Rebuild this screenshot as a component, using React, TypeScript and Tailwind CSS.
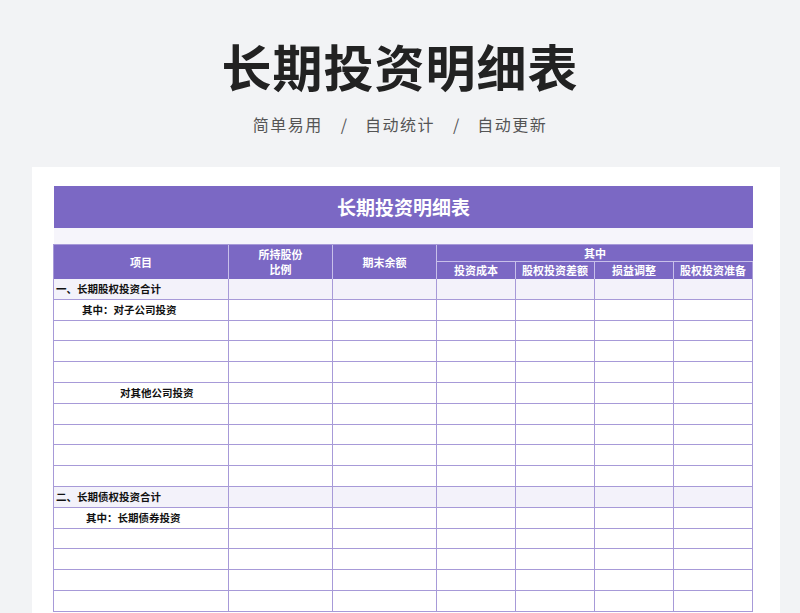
import React from "react";

const rows: { t: string; pad: string; shade?: boolean }[] = [
  { t: "一、长期股权投资合计", pad: "pl-[2px]", shade: true },
  { t: "其中：对子公司投资", pad: "pl-[28px]" },
  { t: "", pad: "" },
  { t: "", pad: "" },
  { t: "", pad: "" },
  { t: "对其他公司投资", pad: "pl-[66px]" },
  { t: "", pad: "" },
  { t: "", pad: "" },
  { t: "", pad: "" },
  { t: "", pad: "" },
  { t: "二、长期债权投资合计", pad: "pl-[2px]", shade: true },
  { t: "其中：长期债券投资", pad: "pl-[32px]" },
  { t: "", pad: "" },
  { t: "", pad: "" },
  { t: "", pad: "" },
  { t: "", pad: "" },
];

const widths = ["w-[175px]", "w-[104px]", "w-[104px]", "w-[79px]", "w-[79px]", "w-[79px]", "w-[79px]"];

export default function App() {
  return (
    <div
      className="w-[800px] h-[613px] overflow-hidden bg-[#f2f3f5] flex flex-col items-center"
      style={{ fontFamily: '"Noto Sans CJK SC", "Noto Sans", sans-serif' }}
    >
      <div className="mt-[30px] text-[50px] leading-[70px] font-bold text-[#222] tracking-[1px]">长期投资明细表</div>
      <div className="mt-[12px] text-[16px] leading-[24px] text-[#555] flex gap-[18px]">
        <span className="tracking-[1.5px]">简单易用</span>
        <span>/</span>
        <span className="tracking-[1.5px]">自动统计</span>
        <span>/</span>
        <span className="tracking-[1.5px]">自动更新</span>
      </div>
      <div className="mt-[31px] w-[748px] self-start ml-[32px] flex-1 min-h-0 overflow-hidden bg-white pt-[19px] pl-[22px]">
        <div className="w-[699px] h-[42px] bg-[#7b68c4] flex items-center justify-center text-white text-[19px] font-bold">
          长期投资明细表
        </div>
        <div className="w-[699px] h-[16px] bg-[#f6f5fb]" />
        <div className="w-[700px] -ml-[1px] border-l border-t border-[#a79ad8]">
          <div className="flex h-[34px] bg-[#7b68c4] text-white text-[11px] font-bold">
            <div className="w-[175px] border-r border-[#c8c0ea] flex items-center justify-center">项目</div>
            <div className="w-[104px] border-r border-[#c8c0ea] flex flex-col items-center justify-center leading-[15px]">
              <span>所持股份</span>
              <span>比例</span>
            </div>
            <div className="w-[104px] border-r border-[#c8c0ea] flex items-center justify-center">期末余额</div>
            <div className="flex-1 flex flex-col">
              <div className="h-[17px] border-b border-[#c8c0ea] flex items-center justify-center">其中</div>
              <div className="flex flex-1">
                {["投资成本", "股权投资差额", "损益调整", "股权投资准备"].map((s, i) => (
                  <div key={s} className={`w-[79px] ${i < 3 ? "border-r border-[#c8c0ea]" : "border-r border-[#a79ad8]"} flex items-center justify-center`}>
                    {s}
                  </div>
                ))}
              </div>
            </div>
          </div>
          {rows.map((r, i) => (
            <div key={i} className={`flex h-[20.8px] ${r.shade ? "bg-[#f3f2fa]" : "bg-white"}`}>
              {widths.map((w, j) => (
                <div
                  key={j}
                  className={`${w} border-r border-b border-[#a79ad8] text-[10.5px] font-bold text-[#111] flex items-center ${j === 0 ? r.pad : ""}`}
                >
                  {j === 0 ? r.t : ""}
                </div>
              ))}
            </div>
          ))}
        </div>
      </div>
    </div>
  );
}
